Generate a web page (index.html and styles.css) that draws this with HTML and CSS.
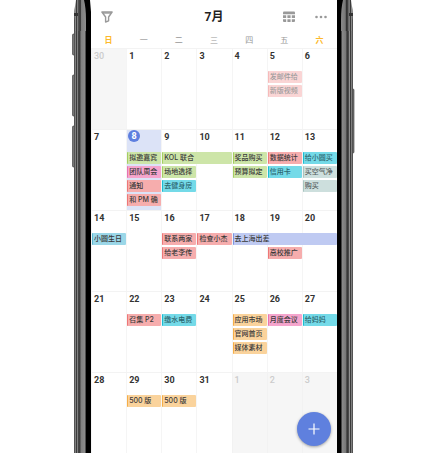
FILE: index.html
```html
<!DOCTYPE html>
<html lang="zh-CN">
<head>
<meta charset="utf-8">
<meta name="viewport" content="width=device-width, initial-scale=1">
<title>7月</title>
<link rel="stylesheet" href="styles.css">
</head>
<body>
<div class="phone">
  <svg class="rail rail-left" aria-hidden="true">
    <defs>
      <linearGradient id="gl">
        <stop offset="0" stop-color="#222"/><stop offset=".1" stop-color="#999"/><stop offset=".2" stop-color="#333"/><stop offset=".28" stop-color="#8a8a8a"/><stop offset=".36" stop-color="#444"/><stop offset=".5" stop-color="#3c3c3c"/><stop offset=".58" stop-color="#808080"/><stop offset=".9" stop-color="#8c8c8c"/><stop offset="1" stop-color="#222"/>
      </linearGradient>
    </defs>
    <g fill="#777" stroke="#333" stroke-width=".6"><rect x=".5" y="34" width="3" height="21" rx="1"/><rect x=".5" y="75" width="3" height="41" rx="1"/><rect x=".5" y="126" width="3" height="41" rx="1"/></g>
    <rect x="2" y="30" width="12" height="100%" fill="url(#gl)"/>
    <path d="M4 0H15V31H2V20Q2 9 4 0Z" fill="url(#gl)"/>
    <path d="M2 13H6V16H2Z" fill="#333"/>
    <path d="M12 0H18L19 12V2000H14V20Q14 8 12 0Z" fill="#000"/>
  </svg>
  <main class="screen">
    <header class="bar">
      <button class="tool" aria-label="筛选"><svg width="12" height="12" viewBox="0 0 12 12" fill="none" stroke="#999" stroke-width="1.4" stroke-linejoin="round"><path d="M.9 1H11.1L7.6 6V9.8L4.6 11V6Z"/><path d="M2 2H10"/></svg></button>
      <h1>7月</h1>
      <div class="tools">
        <button class="tool" aria-label="月视图"><svg width="12" height="12" viewBox="0 0 12 12" fill="#999"><path d="M0 1.5Q0 .5 1 .5H11Q12 .5 12 1.5V3.2H0Z"/><path d="M0 4.3H3.2V7H0ZM4.4 4.3H7.6V7H4.4ZM8.8 4.3H12V7H8.8ZM0 8.3H3.2V11H1Q0 11 0 10ZM4.4 8.3H7.6V11H4.4ZM8.8 8.3H12V10Q12 11 11 11H8.8Z"/></svg></button>
        <button class="tool" aria-label="更多"><svg width="12" height="12" viewBox="0 0 12 12" fill="#999"><circle cx="1.5" cy="6" r="1.3"/><circle cx="6" cy="6" r="1.3"/><circle cx="10.5" cy="6" r="1.3"/></svg></button>
      </div>
    </header>
    <div class="weekdays"><span class="end">日</span><span>一</span><span>二</span><span>三</span><span>四</span><span>五</span><span class="end">六</span></div>

    <section class="week">
      <div class="day out c1">30</div><div class="day c2">1</div><div class="day c3">2</div><div class="day c4">3</div><div class="day c5">4</div><div class="day c6">5</div><div class="day c7">6</div>
      <div class="event red past c6 r1">发邮件给</div><div class="event red past c6 r2">新版视频</div>
    </section>
    <section class="week">
      <div class="day c1">7</div><div class="day today c2"><span>8</span></div><div class="day c3">9</div><div class="day c4">10</div><div class="day c5">11</div><div class="day c6">12</div><div class="day c7">13</div>
      <div class="event green c2 r1">拟邀嘉宾</div><div class="event pink c2 r2">团队周会</div><div class="event red c2 r3">通知</div><div class="event red c2 r4">和 PM 确</div>
      <div class="event green c3 span2 r1">KOL 联合</div><div class="event green c3 r2">场地选择</div><div class="event cyan c3 r3">去健身房</div>
      <div class="event green c5 r1">奖品购买</div><div class="event green c5 r2">预算拟定</div>
      <div class="event red c6 r1">数据统计</div><div class="event cyan c6 r2">信用卡</div>
      <div class="event cyan c7 r1">给小圆买</div><div class="event gray c7 r2">买空气净</div><div class="event gray c7 r3">购买</div>
    </section>
    <section class="week">
      <div class="day c1">14</div><div class="day c2">15</div><div class="day c3">16</div><div class="day c4">17</div><div class="day c5">18</div><div class="day c6">19</div><div class="day c7">20</div>
      <div class="event sky c1 r1">小圆生日</div><div class="event red c3 r1">联系两家</div><div class="event red c3 r2">给老李传</div><div class="event red c4 r1">检查小杰</div><div class="event blue c5 span3 r1">去上海出差</div><div class="event red c6 r2">高校推广</div>
    </section>
    <section class="week">
      <div class="day c1">21</div><div class="day c2">22</div><div class="day c3">23</div><div class="day c4">24</div><div class="day c5">25</div><div class="day c6">26</div><div class="day c7">27</div>
      <div class="event red c2 r1">召集 P2</div><div class="event cyan c3 r1">缴水电费</div><div class="event orange c5 r1">应用市场</div><div class="event orange c5 r2">官网首页</div><div class="event orange c5 r3">媒体素材</div><div class="event pink c6 r1">月度会议</div><div class="event cyan c7 r1">给妈妈</div>
    </section>
    <section class="week">
      <div class="day c1">28</div><div class="day c2">29</div><div class="day c3">30</div><div class="day c4">31</div><div class="day out c5">1</div><div class="day out c6">2</div><div class="day out c7">3</div>
      <div class="event orange c2 r1">500 版</div><div class="event orange c3 r1">500 版</div>
    </section>
    <button class="add" aria-label="新建"><svg width="12" height="12" viewBox="0 0 12 12" stroke="#fff" stroke-width="1.2"><path d="M6 .5V11.5M.5 6H11.5"/></svg></button>
  </main>
  <svg class="rail rail-right" aria-hidden="true">
    <g fill="#777" stroke="#333" stroke-width=".6"><rect x="14" y="89" width="3" height="64" rx="1"/></g>
    <rect x="4" y="30" width="12" height="100%" fill="url(#gr)"/>
    <defs><linearGradient id="gr"><stop offset="0" stop-color="#222"/><stop offset=".12" stop-color="#888"/><stop offset=".4" stop-color="#777"/><stop offset=".5" stop-color="#333"/><stop offset=".62" stop-color="#444"/><stop offset=".7" stop-color="#999"/><stop offset=".8" stop-color="#333"/><stop offset=".9" stop-color="#999"/><stop offset="1" stop-color="#222"/></linearGradient></defs>
    <path d="M3 0H14Q16 9 16 20V31H3Z" fill="url(#gr)"/>
    <path d="M12 13H16V16H12Z" fill="#333"/>
    <path d="M0 0H6Q4 8 4 20V2000H0Z" fill="#000"/>
  </svg>
</div>
</body>
</html>
```
FILE: styles.css
```css
* { box-sizing: border-box; }
body {
  margin: 0;
  background: #fff;
  color: #333;
  font-family: Roboto, "Noto Sans CJK SC", sans-serif;
  overflow: hidden;
}
button { border: 0; padding: 0; background: none; }
svg { display: block; }
.phone {
  display: flex;
  min-height: 100vh;
  margin: 0 71px 0 72px;
}
.rail { height: auto; flex: none; }
.rail-left { width: 19px; }
.rail-right { width: 18px; }
.screen { position: relative; flex: 1; min-width: 0; }

.bar {
  display: grid;
  grid-template-columns: 1fr auto 1fr;
  align-items: center;
  height: 34px;
  padding: 0 10px;
}
.bar h1 { margin: 0; font-size: 12px; line-height: 34px; font-weight: 700; color: #222; }
.tools { display: flex; justify-content: flex-end; gap: 20px; }

.weekdays, .week { display: grid; grid-template-columns: repeat(7, minmax(0, 1fr)); }
.weekdays { height: 14px; font-size: 8px; line-height: 14px; text-align: center; color: #999; }
.weekdays .end { color: #fdb92b; font-weight: 700; }

.week {
  grid-template-rows: 20px repeat(4, 12px) 1fr;
  row-gap: 2px;
  height: 81px;
  border-top: 1px solid #f3f3f3;
}
.day {
  grid-row: 1 / -1;
  padding: 1px 2px;
  border-left: 1px solid #f5f5f5;
  font-size: 9px;
  line-height: 12px;
  font-weight: 700;
}
.out { background: #f6f6f6; color: #ccc; font-weight: 500; border-color: #f2f2f2; }
.today { background: #dce3f7; padding: 0 1px; }
.today span {
  display: block;
  width: 12px;
  height: 12px;
  border-radius: 50%;
  background: #5e7fdf;
  color: #fff;
  text-align: center;
}

.event {
  --ink: #3a3a3a;
  margin-left: 1px;
  padding-left: 1px;
  border-left: 1px solid var(--edge);
  border-radius: 1px;
  background: var(--bg);
  color: var(--ink);
  font-family: Inter, "Noto Sans CJK SC", sans-serif;
  font-size: 7px;
  line-height: 12px;
  font-weight: 500;
  white-space: nowrap;
  overflow: hidden;
}
.red { --bg: #f6adad; --edge: #ee7777; }
.green { --bg: #cde5a8; --edge: #a5cf62; }
.pink { --bg: #f5a5cd; --edge: #e873b0; }
.cyan { --bg: #74dae8; --edge: #1bbdd3; }
.sky { --bg: #9bd7e8; --edge: #5fb9d2; }
.gray { --bg: #cddfdd; --edge: #a9c5c1; }
.blue { --bg: #bfcaf2; --edge: #7d94e2; }
.orange { --bg: #fad39c; --edge: #f5ae48; }
.event.cyan { --ink: #2c6670; }
.event.gray { --ink: #56605f; }
.past { opacity: .5; }

.c1 { grid-column: 1; }
.c2 { grid-column: 2; }
.c3 { grid-column: 3; }
.c4 { grid-column: 4; }
.c5 { grid-column: 5; }
.c6 { grid-column: 6; }
.c7 { grid-column: 7; }
.span2 { grid-column-end: span 2; }
.span3 { grid-column-end: span 3; }
.r1 { grid-row: 2; }
.r2 { grid-row: 3; }
.r3 { grid-row: 4; }
.r4 { grid-row: 5; }

.add {
  position: absolute;
  right: 6px;
  bottom: 7px;
  display: grid;
  place-items: center;
  width: 34px;
  height: 34px;
  border-radius: 50%;
  background: #5f80de;
  box-shadow: 0 1px 3px rgba(0, 0, 0, .35);
}
```
